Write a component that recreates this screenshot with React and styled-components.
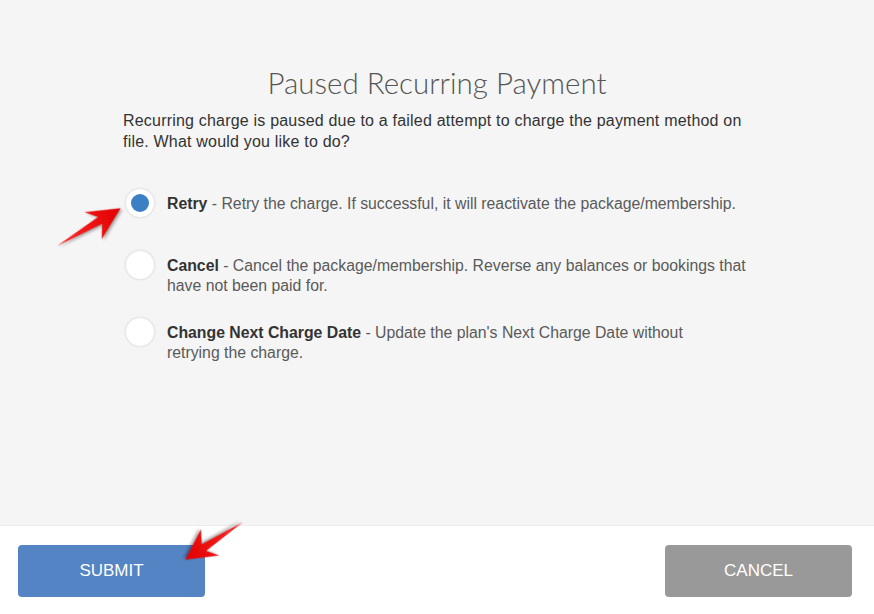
import React from "react";
import styled, { createGlobalStyle } from "styled-components";

const GlobalStyle = createGlobalStyle`
  html, body {
    margin: 0;
    padding: 0;
    background: #ffffff;
  }
  body {
    font-family: "Liberation Sans", Arial, sans-serif;
  }
`;

const Modal = styled.div`
  position: relative;
  width: 874px;
  height: 614px;
  display: flex;
  flex-direction: column;
  overflow: hidden;
`;

const Body = styled.div`
  flex: 1;
  background: #f5f5f5;
  padding: 66px 123px 0;
`;

const Title = styled.h1`
  margin: 0;
  text-align: center;
  font-family: "Lato", "Liberation Sans", sans-serif;
  font-weight: 300;
  font-size: 29.5px;
  line-height: 34px;
  color: #555555;
`;

const Description = styled.p`
  margin: 10px 0 0;
  max-width: 630px;
  font-size: 16px;
  letter-spacing: 0.2px;
  line-height: 21px;
  color: #333333;
`;

const Options = styled.div`
  margin-top: 37px;
  display: flex;
  flex-direction: column;
`;

const Option = styled.label`
  display: flex;
  align-items: flex-start;
  gap: 13px;
  margin-top: ${props => props.spacing || 0}px;
  cursor: pointer;
`;

const Radio = styled.span`
  flex: none;
  width: 28px;
  height: 28px;
  margin-left: 3px;
  border-radius: 50%;
  background: #ffffff;
  box-shadow: 0 0 3px rgba(0, 0, 0, 0.18);
  display: flex;
  align-items: center;
  justify-content: center;

  &::after {
    content: "";
    width: 18px;
    height: 18px;
    border-radius: 50%;
    background: ${props => (props.checked ? "#3b7fc4" : "transparent")};
  }
`;

const OptionText = styled.div`
  padding-top: 5px;
  font-size: 15.8px;
  line-height: 20px;
  white-space: pre-line;
  color: #5a5a5a;

  strong {
    color: #333333;
    font-weight: bold;
  }
`;

const Footer = styled.div`
  height: 89px;
  box-sizing: border-box;
  background: #ffffff;
  border-top: 1px solid #ececec;
  padding: 19px 22px 17px 18px;
  display: flex;
  align-items: flex-start;
  justify-content: space-between;
`;

const Button = styled.button`
  width: 187px;
  height: 52px;
  border: none;
  border-radius: 4px;
  background: ${props => (props.primary ? "#5584c4" : "#999999")};
  color: #ffffff;
  font-family: "Liberation Sans", Arial, sans-serif;
  font-size: 17px;
  text-transform: uppercase;
  cursor: pointer;
`;

const ArrowSvg = styled.svg`
  position: absolute;
  left: ${props => props.x}px;
  top: ${props => props.y - 20}px;
  transform-origin: 0 20px;
  transform: rotate(${props => props.angle}deg);
  overflow: visible;
  filter: drop-shadow(1px 2px 1.5px rgba(0, 0, 0, 0.35));
  pointer-events: none;
`;

const Arrow = ({ x, y, angle, length }) => {
  const s = length / 74;
  const pts = [
    [0, 0],
    [50, -4],
    [41, -15],
    [74, 0],
    [42, 17],
    [50, 4]
  ]
    .map(([px, py]) => `${px * s},${py}`)
    .join(" ");
  return (
    <ArrowSvg x={x} y={y} angle={angle} width={length} height={40} viewBox={`0 -20 ${length} 40`}>
      <defs>
        <linearGradient id={`ag${x}`} x1="0" y1="0" x2="1" y2="0">
          <stop offset="0" stopColor="#ff2a2a" />
          <stop offset="1" stopColor="#e00000" />
        </linearGradient>
      </defs>
      <polygon points={pts} fill={`url(#ag${x})`} />
    </ArrowSvg>
  );
};

const options = [
  {
    label: "Retry",
    text: "Retry the charge. If successful, it will reactivate the package/membership.",
    checked: true,
    spacing: 0
  },
  {
    label: "Cancel",
    text: "Cancel the package/membership. Reverse any balances or bookings that\nhave not been paid for.",
    spacing: 34
  },
  {
    label: "Change Next Charge Date",
    text: "Update the plan's Next Charge Date without\nretrying the charge.",
    spacing: 22
  }
];

export default function App() {
  return (
    <Modal>
      <GlobalStyle />
      <Body>
        <Title>Paused Recurring Payment</Title>
        <Description>
          Recurring charge is paused due to a failed attempt to charge the
          payment method on file. What would you like to do?
        </Description>
        <Options>
          {options.map(o => (
            <Option key={o.label} spacing={o.spacing}>
              <Radio checked={o.checked} />
              <OptionText>
                <strong>{o.label}</strong> - {o.text}
              </OptionText>
            </Option>
          ))}
        </Options>
      </Body>
      <Footer>
        <Button primary>Submit</Button>
        <Button>Cancel</Button>
      </Footer>
      <Arrow x={57} y={246} angle={-30.7} length={74} />
      <Arrow x={243} y={522} angle={146.8} length={69} />
    </Modal>
  );
}
